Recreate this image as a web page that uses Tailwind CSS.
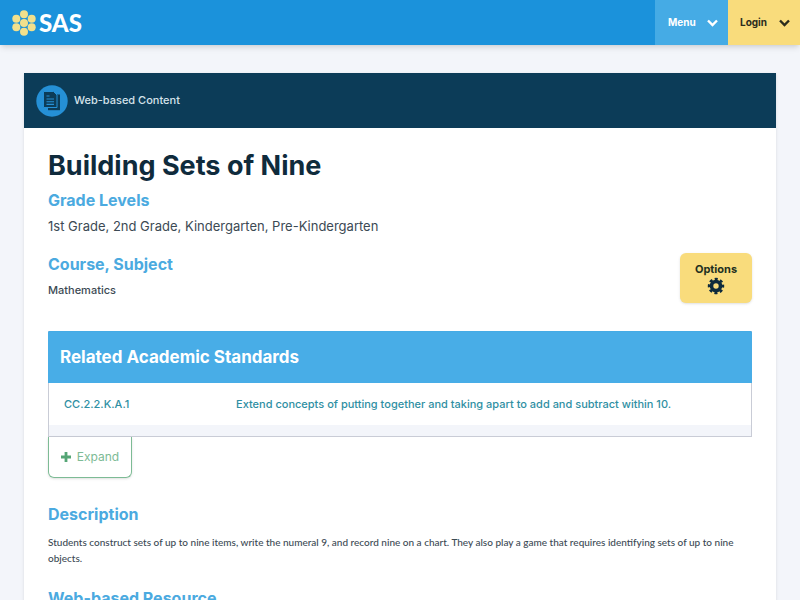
<!DOCTYPE html>
<html lang="en">
<head>
  <meta charset="UTF-8" />
  <meta name="viewport" content="width=device-width, initial-scale=1.0" />
  <title>Building Sets of Nine - SAS</title>
  <script src="https://cdn.jsdelivr.net/npm/@tailwindcss/browser@4"></script>
</head>
<body class="bg-[#f3f5fa] font-['Inter',sans-serif] text-[#3c4a54] overflow-x-hidden">
  <!-- Header -->
  <header class="flex justify-between h-[45px] bg-[#1b92db] shadow-md">
    <a href="#" class="flex items-center gap-[3px] pl-3 text-white" aria-label="SAS home">
      <svg class="w-6 h-[26px]" viewBox="0 0 24 26" fill="#f2e08c">
        <circle cx="12" cy="13" r="4" />
        <circle cx="12" cy="4.3" r="4" />
        <circle cx="12" cy="21.7" r="4" />
        <circle cx="4.3" cy="8.7" r="4" />
        <circle cx="19.7" cy="8.7" r="4" />
        <circle cx="4.3" cy="17.3" r="4" />
        <circle cx="19.7" cy="17.3" r="4" />
      </svg>
      <span class="font-['Lato',sans-serif] text-2xl font-black leading-none">SAS</span>
    </a>
    <nav class="flex text-[10px] font-bold">
      <button type="button" class="flex items-center justify-between w-[73px] pl-[13px] pr-[10px] bg-[#45abe5] text-white">Menu
        <svg class="w-[11px] h-2" viewBox="0 0 11 8" fill="none" stroke="currentColor" stroke-width="2.4"><path d="M1 1.5l4.5 4.5L10 1.5" /></svg>
      </button>
      <button type="button" class="flex items-center justify-between w-[72px] pl-3 pr-[10px] bg-[#f9dc7c] text-[#2b2c1c]">Login
        <svg class="w-[11px] h-2" viewBox="0 0 11 8" fill="none" stroke="currentColor" stroke-width="2.4"><path d="M1 1.5l4.5 4.5L10 1.5" /></svg>
      </button>
    </nav>
  </header>

  <!-- Content card -->
  <main class="mx-6 mt-7 bg-white shadow-sm">
    <div class="flex items-center gap-[6px] h-[55px] px-3 bg-[#0c3c58] text-[#d5e2ea] text-[11px] font-medium">
      <svg class="w-8 h-8" viewBox="0 0 32 32">
        <circle cx="16" cy="16" r="15.7" fill="#2590d6" />
        <path d="M12 9.500h12v15.700H12z" fill="#0c3c58" />
        <path d="M7.500 6.500h10l3.500 3.500v12.500H7.500z" fill="#0c3c58" stroke="#2590d6" />
        <path d="M10.500 11h3M10.500 14h7.500M10.500 16.700h7.500M10.500 19.400h7.500" stroke="#2590d6" stroke-width="1.100" />
      </svg>
      Web-based Content
    </div>

    <div class="px-6 pt-5">
      <h1 class="text-[27px] leading-9 font-bold text-[#0f2b3c]">Building Sets of Nine</h1>
      <div class="flex justify-between items-end">
        <div>
          <h2 class="mt-1 text-base leading-6 font-bold text-[#4baae0]">Grade Levels</h2>
          <p class="mt-1 text-[13px] leading-5">1st Grade, 2nd Grade, Kindergarten, Pre-Kindergarten</p>
          <h2 class="mt-4 text-base leading-6 font-bold text-[#4baae0]">Course, Subject</h2>
          <p class="mt-1 pb-[3px] text-[11px] font-medium leading-5">Mathematics</p>
        </div>
        <button type="button" class="flex flex-col items-center justify-center w-[72px] h-[50px] rounded-md bg-[#f9dc7c] text-[11px] leading-4 font-bold text-[#22301f] shadow">Options
          <svg class="w-[18px] h-[18px]" viewBox="0 0 16 16" fill="none" stroke="#0f2b3c">
            <circle cx="8" cy="8" r="4" stroke-width="3.200" />
            <circle cx="8" cy="8" r="6.200" stroke-width="2.200" stroke-dasharray="2.700 2.170" stroke-dashoffset="1.350" />
          </svg>
        </button>
      </div>

      <!-- Standards -->
      <section class="mt-7">
        <div class="border border-[#c9ccd6] border-t-[#45abe5] pb-[11px] bg-[#f3f5fa]">
          <h2 class="-mx-px px-3 h-[51px] leading-[51px] bg-[#48ade7] text-[17px] font-bold text-white">Related Academic Standards</h2>
          <table class="w-full bg-white text-[11px] font-medium text-[#2f8fa3]">
            <tbody>
              <tr class="h-[42px]">
                <td class="w-[171px] pl-[15px]"><a href="#">CC.2.2.K.A.1</a></td>
                <td class="pl-4"><a href="#">Extend concepts of putting together and taking apart to add and subtract within 10.</a></td>
              </tr>
            </tbody>
          </table>
        </div>
        <button type="button" class="flex items-center justify-center gap-[6px] w-[84px] h-[41px] rounded-b-md border border-t-0 border-[#7dbb95] text-xs text-[#7dbb95] shadow-sm">
          <svg class="w-[10px] h-[10px]" viewBox="0 0 10 10" stroke="#55a575" stroke-width="2.800"><path d="M5 0v10M0 5h10" /></svg>
          Expand
        </button>
      </section>

      <h2 class="mt-6 text-base leading-6 font-bold text-[#4baae0]">Description</h2>
      <p class="mt-2 font-['Lato',sans-serif] text-[10px] leading-4 font-medium">Students construct sets of up to nine items, write the numeral 9, and record nine on a chart. They also play a game that requires identifying sets of up to nine objects.</p>
      <h2 class="mt-5 text-base leading-6 font-bold text-[#4baae0]">Web-based Resource</h2>
    </div>
  </main>
</body>
</html>
